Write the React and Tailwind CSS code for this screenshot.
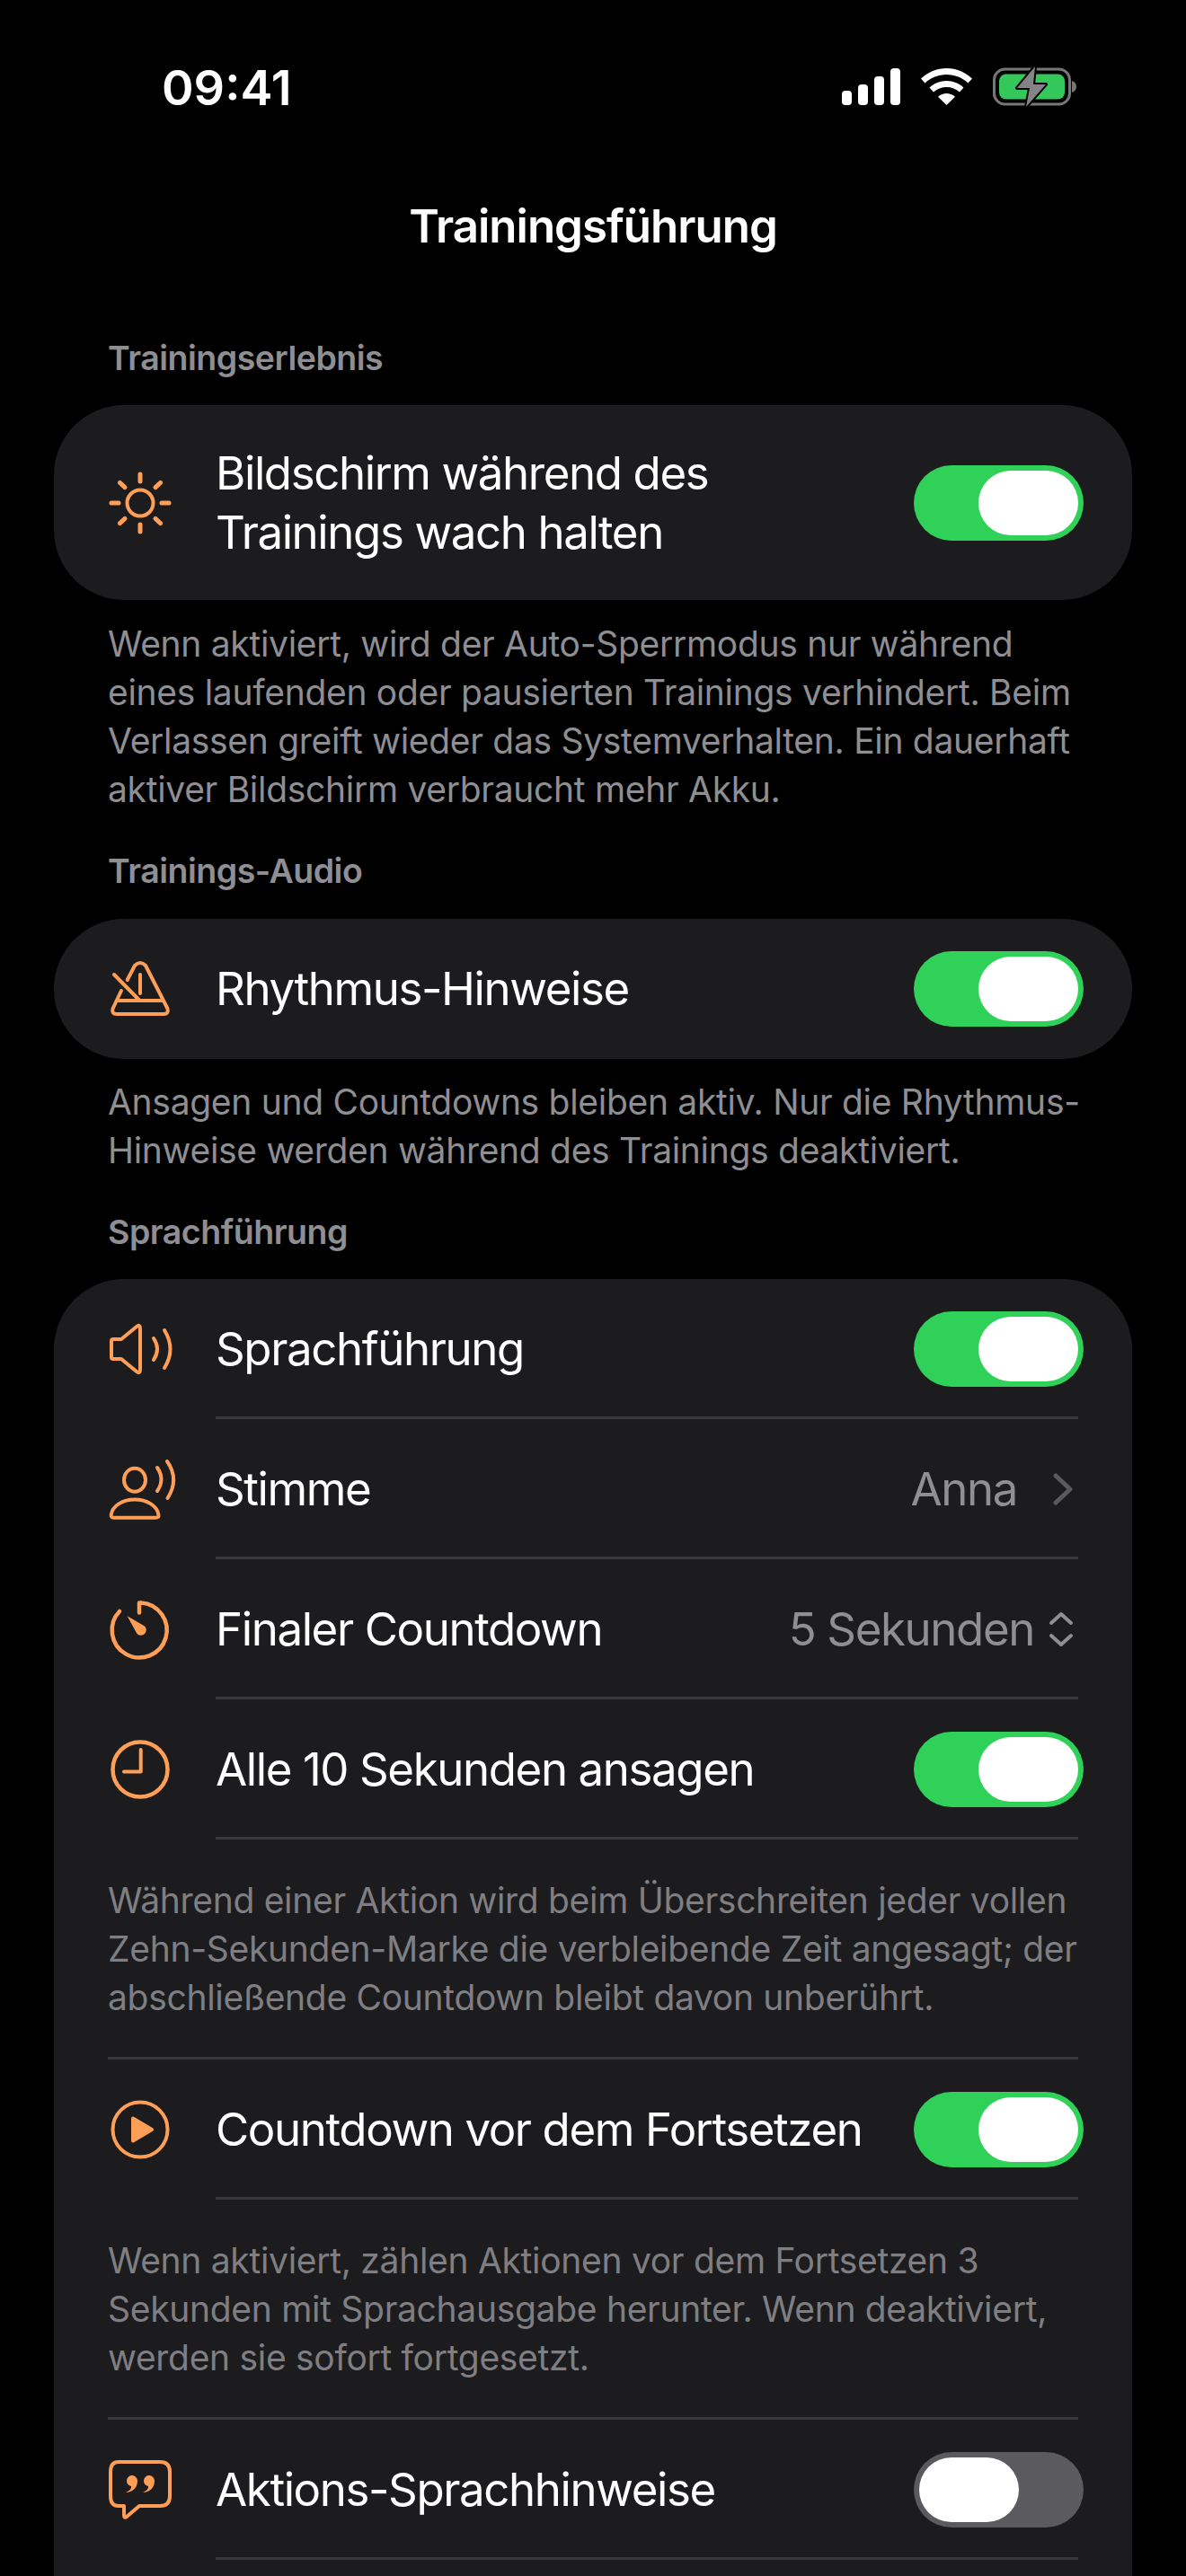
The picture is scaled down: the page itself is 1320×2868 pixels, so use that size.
const ORANGE = "#ff9f57";

function IconSvg({ children, fill = "none" }) {
  return (
    <svg width="72" height="72" viewBox="0 0 72 72" fill={fill} stroke={ORANGE} strokeWidth="4" strokeLinecap="round" strokeLinejoin="round" className="shrink-0 overflow-visible">
      {children}
    </svg>
  );
}

function SunIcon() {
  return (
    <IconSvg>
      <circle cx="36" cy="36" r="14.5" />
      <path d="M36 4V12M36 60V68M4 36H12M60 36H68M13.4 13.4L19 18.6M53 53.4L58.6 58.6M13.4 58.6L19 53.4M53 18.6L58.6 13.4" strokeWidth="5" />
    </IconSvg>
  );
}

function MetronomeIcon() {
  return (
    <IconSvg>
      <path d="M21.7 26L30 10Q36 4 42 10L66.5 58Q68 64 62 64H10Q4 64 5.5 58L15 38" />
      <path d="M7 20L35 48.5M36 20V41M12 49H60" />
    </IconSvg>
  );
}

function SpeakerIcon() {
  return (
    <IconSvg>
      <path d="M6 25H15L32 11Q36 8 36 13V59Q36 64 32 61L15 47H6Q4 47 4 45V27Q4 25 6 25Z" />
      <path d="M51 24Q59 36 51 48M63 15Q76 36 63 57" />
    </IconSvg>
  );
}

function VoiceIcon() {
  return (
    <IconSvg>
      <ellipse cx="30" cy="25.7" rx="12" ry="13" />
      <path d="M7 67.7H53.5Q57 67.7 56.5 64.7C55 54 43 47.5 30 47.5C17 47.5 5 54 3.7 64.7Q3.5 67.7 7 67.7Z" />
      <path d="M55 12Q64 25 55 38M66 5Q80 25 66.5 46" />
    </IconSvg>
  );
}

function TimerIcon() {
  return (
    <IconSvg>
      <path d="M35 17.5V6.5H37A30.5 30.5 0 1 1 13 16" strokeWidth="4.5" />
      <path d="M21.7 21.3L41 32.5A6 6 0 0 1 32.5 41Z" fill={ORANGE} stroke="none" />
    </IconSvg>
  );
}

function ClockIcon() {
  return (
    <IconSvg>
      <circle cx="36" cy="36" r="30.5" strokeWidth="4.5" />
      <path d="M36.7 14V38.5H18" />
    </IconSvg>
  );
}

function PlayIcon() {
  return (
    <IconSvg>
      <circle cx="36" cy="36" r="30.5" />
      <path d="M28 23.5V48.5L49 36Z" fill={ORANGE} />
    </IconSvg>
  );
}

function QuoteIcon() {
  return (
    <IconSvg>
      <path d="M12 5H58Q69 5 69 16V43Q69 54 58 54H35L21 66Q18 68 18 64V54H12Q3 54 3 43V16Q3 5 12 5Z" />
      <path d="M33 26a6 6 0 1 0-7 6c.5 3-2 5-6 7 7 0 13-5 13-13ZM52 26a6 6 0 1 0-7 6c.5 3-2 5-6 7 7 0 13-5 13-13Z" fill={ORANGE} stroke="none" />
    </IconSvg>
  );
}

function Toggle({ on }) {
  return (
    <div className={`flex h-[84px] w-[189px] shrink-0 rounded-full p-[6px] ${on ? "justify-end bg-[#30d158]" : "justify-start bg-[#5a5a5f]"}`}>
      <div className="h-[72px] w-[111px] rounded-full bg-white" />
    </div>
  );
}

function Row({ icon, label, children }) {
  return (
    <div className="relative flex h-[156px] items-center gap-[48px] pl-[60px] pr-[54px]">
      {icon}
      <span className="flex-1 text-[51px] leading-[66px] tracking-[-1.4px] text-white">{label}</span>
      {children}
      <div className="absolute bottom-0 left-[180px] right-[60px] h-[3px] bg-[#38383a]" />
    </div>
  );
}

function Header({ children }) {
  return <div className="px-[120px] text-[37.5px] font-semibold leading-[54px] tracking-[-0.5px] text-[#8e8e93]">{children}</div>;
}

function Foot({ children }) {
  return <p className="px-[120px] text-[39px] leading-[54px] tracking-[-0.3px] text-[#8e8e93]">{children}</p>;
}

function CardNote({ children }) {
  return (
    <div className="mx-[60px] border-b-[3px] border-[#38383a] pb-[39px] pt-[41px] text-[39px] leading-[54px] tracking-[-0.3px] text-[#7f7f83]">
      {children}
    </div>
  );
}

export default function App() {
  return (
    <div className="h-[2868px] w-[1320px] overflow-hidden bg-black" style={{ fontFamily: "Inter, 'Noto Sans', sans-serif" }}>
      {/* Statusleiste */}
      <div className="relative h-[150px]">
        <span className="absolute left-[180px] top-[68px] text-[54px] font-semibold leading-[60px] text-white">09:41</span>
        <svg className="absolute left-[937px] top-[76px]" width="65" height="41" viewBox="0 0 65 41" fill="#fff">
          <rect x="0" y="25" width="11" height="16" rx="4" />
          <rect x="18" y="18" width="11" height="23" rx="4" />
          <rect x="36" y="9" width="11" height="32" rx="4" />
          <rect x="54" y="0" width="11" height="41" rx="4" />
        </svg>
        <svg className="absolute left-[1025px] top-[76px]" width="57" height="41" viewBox="0 0 57 41" fill="#fff">
          <path d="M28.5 0C17.5 0 7.8 4.3 0 11.5L4.5 16.5C11 10.5 19.3 7 28.5 7C37.7 7 46 10.5 52.5 16.5L57 11.5C49.2 4.3 39.5 0 28.5 0Z" />
          <path d="M28.5 14C21.3 14 14.8 16.8 9.5 21.5L14 26.5C17.9 23 23 21 28.5 21C34 21 39.1 23 43 26.5L47.5 21.5C42.2 16.8 35.7 14 28.5 14Z" />
          <path d="M28.5 28C25 28 21.7 29.3 19 31.7L28.5 41L38 31.7C35.3 29.3 32 28 28.5 28Z" />
        </svg>
        <svg className="absolute left-[1105px] top-[74px]" width="93" height="45" viewBox="0 0 93 45" fill="none">
          <rect x="1.5" y="3" width="84" height="39" rx="12" stroke="#77777a" strokeWidth="3" />
          <rect x="7" y="8.5" width="73" height="28" rx="7.5" fill="#34c759" />
          <path d="M88 16C91 17 93 19 93 22.5C93 26 91 28 88 29Z" fill="#77777a" />
          <path d="M47 0L27 24H41L37 45L59 20H45Z" fill="#848487" stroke="#000" strokeWidth="4" strokeLinejoin="round" paintOrder="stroke" />
        </svg>
      </div>

      <h1 className="mt-[74px] text-center text-[51px] font-semibold leading-[56px] tracking-[-1px] text-white">Trainingsführung</h1>

      <div className="mt-[92px]">
        <Header>Trainingserlebnis</Header>
        <div className="mx-[60px] mt-[25px] flex h-[217px] items-center gap-[48px] rounded-[78px] bg-[#1c1c1e] pl-[60px] pr-[54px]">
          <SunIcon />
          <span className="flex-1 text-[51px] leading-[66px] tracking-[-1.4px] text-white">Bildschirm während des<br />Trainings wach halten</span>
          <Toggle on />
        </div>
        <div className="mt-[22px]">
          <Foot>Wenn aktiviert, wird der Auto-Sperrmodus nur während eines laufenden oder pausierten Trainings verhindert. Beim Verlassen greift wieder das Systemverhalten. Ein dauerhaft aktiver Bildschirm verbraucht mehr Akku.</Foot>
        </div>
      </div>

      <div className="mt-[37px]">
        <Header>Trainings-Audio</Header>
        <div className="mx-[60px] mt-[26px] flex h-[156px] items-center gap-[48px] rounded-[78px] bg-[#1c1c1e] pl-[60px] pr-[54px]">
          <MetronomeIcon />
          <span className="flex-1 text-[51px] leading-[66px] tracking-[-1.4px] text-white">Rhythmus-Hinweise</span>
          <Toggle on />
        </div>
        <div className="mt-[21px]">
          <Foot>
            <span className="whitespace-nowrap">Ansagen und Countdowns bleiben aktiv. Nur die Rhythmus-</span>
            <br />
            Hinweise werden während des Trainings deaktiviert.
          </Foot>
        </div>
      </div>

      <div className="mt-[37px]">
        <Header>Sprachführung</Header>
        <div className="mx-[60px] mt-[25px] rounded-t-[78px] bg-[#1c1c1e] pb-[40px]">
          <Row icon={<SpeakerIcon />} label="Sprachführung"><Toggle on /></Row>
          <Row icon={<VoiceIcon />} label="Stimme">
            <span className="-mr-[9px] text-[51px] leading-[66px] tracking-[-1.4px] text-[#8e8e93]">Anna</span>
            <svg className="mr-[11px]" width="24" height="36" viewBox="0 0 24 36" fill="none" stroke="#5a5a5e" strokeWidth="5" strokeLinecap="round" strokeLinejoin="round">
              <path d="M4 3L20 18L4 33" />
            </svg>
          </Row>
          <Row icon={<TimerIcon />} label="Finaler Countdown">
            <span className="-mr-[32px] text-[51px] leading-[66px] tracking-[-1.4px] text-[#8e8e93]">5 Sekunden</span>
            <svg className="mr-[11px]" width="28" height="42" viewBox="0 0 28 42" fill="none" stroke="#8e8e93" strokeWidth="4" strokeLinecap="round" strokeLinejoin="round">
              <path d="M3 14L14 4L25 14M3 28L14 38L25 28" />
            </svg>
          </Row>
          <Row icon={<ClockIcon />} label="Alle 10 Sekunden ansagen"><Toggle on /></Row>
          <CardNote>Während einer Aktion wird beim Überschreiten jeder vollen Zehn-Sekunden-Marke die verbleibende Zeit angesagt; der abschließende Countdown bleibt davon unberührt.</CardNote>
          <Row icon={<PlayIcon />} label="Countdown vor dem Fortsetzen"><Toggle on /></Row>
          <CardNote>Wenn aktiviert, zählen Aktionen vor dem Fortsetzen 3 Sekunden mit Sprachausgabe herunter. Wenn deaktiviert, werden sie sofort fortgesetzt.</CardNote>
          <Row icon={<QuoteIcon />} label="Aktions-Sprachhinweise"><Toggle on={false} /></Row>
        </div>
      </div>
    </div>
  );
}
